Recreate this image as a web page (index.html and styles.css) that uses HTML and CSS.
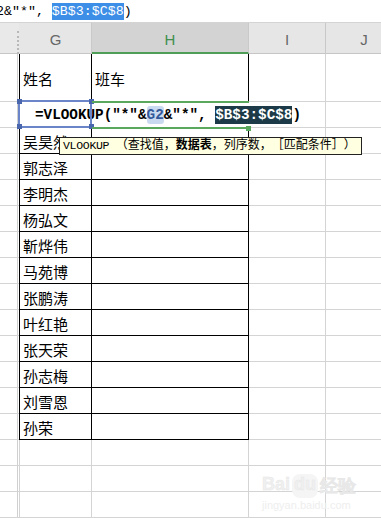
FILE: index.html
```html
<!DOCTYPE html>
<html lang="zh">
<head>
<meta charset="utf-8">
<link rel="stylesheet" href="styles.css">
</head>
<body>
<div class="fx"><span class="fx-text">2&amp;"*", <span class="fx-sel">$B$3:$C$8</span>)</span></div>
<div class="sheet">
  <div class="c f hd hd-f"></div>
  <div class="c g hd">G</div>
  <div class="c h hd hd-on">H</div>
  <div class="c i hd">I</div>
  <div class="c j hd">J</div>

  <div class="c f"></div>
  <div class="c g t tx">姓名</div>
  <div class="c h t tx">班车</div>
  <div class="c i"></div>
  <div class="c j"></div>

  <div class="c f"></div>
  <div class="c g t edit">
    <div class="editor"><span>=VLOOKUP("*"&amp;<span class="ref">G2</span>&amp;"*", <span class="rng">$B$3:$C$8</span>)</span></div>
    <span class="frame"></span>
    <span class="hdl hdl-tl"></span><span class="hdl hdl-tr"></span><span class="hdl hdl-bl"></span><span class="hdl hdl-br"></span>
  </div>
  <div class="c h t hsel"><span class="ghdl"></span></div>
  <div class="c i"></div>
  <div class="c j"></div>

  <div class="c f"></div><div class="c g t tx">吴昊然</div><div class="c h t"></div><div class="c i"></div><div class="c j"></div>
  <div class="c f"></div><div class="c g t tx">郭志泽</div><div class="c h t"></div><div class="c i"></div><div class="c j"></div>
  <div class="c f"></div><div class="c g t tx">李明杰</div><div class="c h t"></div><div class="c i"></div><div class="c j"></div>
  <div class="c f"></div><div class="c g t tx">杨弘文</div><div class="c h t"></div><div class="c i"></div><div class="c j"></div>
  <div class="c f"></div><div class="c g t tx">靳烨伟</div><div class="c h t"></div><div class="c i"></div><div class="c j"></div>
  <div class="c f"></div><div class="c g t tx">马苑博</div><div class="c h t"></div><div class="c i"></div><div class="c j"></div>
  <div class="c f"></div><div class="c g t tx">张鹏涛</div><div class="c h t"></div><div class="c i"></div><div class="c j"></div>
  <div class="c f"></div><div class="c g t tx">叶红艳</div><div class="c h t"></div><div class="c i"></div><div class="c j"></div>
  <div class="c f"></div><div class="c g t tx">张天荣</div><div class="c h t"></div><div class="c i"></div><div class="c j"></div>
  <div class="c f"></div><div class="c g t tx">孙志梅</div><div class="c h t"></div><div class="c i"></div><div class="c j"></div>
  <div class="c f"></div><div class="c g t tx">刘雪恩</div><div class="c h t"></div><div class="c i"></div><div class="c j"></div>
  <div class="c f"></div><div class="c g t tx">孙荣</div><div class="c h t"></div><div class="c i"></div><div class="c j"></div>

  <div class="c f"></div><div class="c g"></div><div class="c h"></div><div class="c i"></div><div class="c j"></div>
  <div class="c f"></div><div class="c g"></div><div class="c h"></div><div class="c i"></div><div class="c j"></div>
  <div class="c f"></div><div class="c g"></div><div class="c h"></div><div class="c i"></div><div class="c j"></div>

  <div class="tip"><span><span class="lat">VLOOKUP </span>（查找值，<b>数据表</b>，列序数，［匹配条件］）</span></div>

  <div class="wm">
    <div class="wm-top"><span>Bai</span><span class="wm-paw">du</span><span>经验</span></div>
    <div class="wm-url">jingyan.baidu.com</div>
  </div>
</div>
</body>
</html>
```

FILE: styles.css
```css
* { box-sizing: border-box; }
html, body { margin: 0; padding: 0; background: #fff; }
body {
  width: 381px;
  height: 518px;
  overflow: hidden;
  font-family: "Noto Sans CJK SC", "Liberation Sans", sans-serif;
}

.fx {
  height: 23px;
  border-bottom: 1px solid #d4d4d4;
  background: #fff;
  display: flex;
  align-items: center;
  overflow: hidden;
  white-space: nowrap;
  font-family: "Liberation Mono", "Noto Sans CJK SC", monospace;
  font-size: 13.3px;
  color: #000;
}
.fx-text { margin-left: -4px; }
.fx-sel { background: #3d8ee6; color: #fff; padding: 1px 0; }

.sheet {
  position: relative;
  display: grid;
  grid-template-columns: 19px 73px 157px 77px 77px;
  grid-template-rows: 31px 48px 26px repeat(15, 26px);
  width: 403px;
}

.c {
  border-right: 1px solid #d4d4d4;
  border-bottom: 1px solid #d4d4d4;
  min-width: 0;
}
.f { border-right: none; box-shadow: inset -1px 0 0 #fff, inset -2px 0 0 #d0d0d0; }
.g { border-left: 1px solid #d4d4d4; }

.hd {
  background: #e6e6e6;
  border-bottom-color: #c6c6c6;
  border-right-color: #c9c9c9;
  display: flex;
  align-items: center;
  justify-content: center;
  font-family: "Liberation Sans", sans-serif;
  font-size: 15px;
  color: #666;
  padding-top: 2px;
}
.hd.g { border-left-color: #e6e6e6; }
.hd-f { border-right: none; box-shadow: none; background: #e9e9e9; position: relative; }
.hd-f::after {
  content: "";
  position: absolute;
  right: 0;
  top: 8px;
  height: 23px;
  border-right: 2px dotted #b8b8b8;
}
.hd-on {
  background: #d3d3d3;
  color: #3f8f4f;
  border-bottom: 2px solid #4e9e58;
  padding-top: 3px;
}

.t { border-right-color: #000; border-bottom-color: #000; }
.g.t { border-left-color: #000; }

.tx {
  font-size: 15px;
  color: #000;
  display: flex;
  align-items: center;
  padding-left: 3px;
  padding-top: 1px;
  white-space: nowrap;
  overflow: hidden;
}

.edit { position: relative; z-index: 2; }
.editor {
  position: absolute;
  left: 0;
  top: 0;
  height: 25px;
  width: 290px;
  background: #fff;
  padding-left: 15px;
  display: flex;
  align-items: center;
  white-space: pre;
  font-family: "Liberation Mono", monospace;
  font-weight: bold;
  font-size: 14.3px;
  color: #000;
}
.ref {
  background: #c9d9ef;
  color: #34589a;
  border-radius: 3px;
  padding: 1px 0;
}
.rng {
  background: #1c3a47;
  color: #fff;
  padding: 1px 0;
}
.frame {
  position: absolute;
  left: -2px;
  top: -2px;
  width: 74px;
  height: 28px;
  border: 2px solid #6b86c8;
}
.hdl {
  position: absolute;
  width: 5px;
  height: 5px;
  background: #4a66ad;
}
.hdl-tl { left: -3px; top: -3px; }
.hdl-tr { left: 69px; top: -3px; }
.hdl-bl { left: -3px; top: 22px; }
.hdl-br { left: 69px; top: 22px; }

.hsel { position: relative; z-index: 3; border-right-color: transparent; border-bottom-color: transparent; }
.hsel::before, .hsel::after {
  content: "";
  position: absolute;
  left: 0;
  width: 157px;
  height: 2px;
  background: #5aa85e;
}
.hsel::before { top: -1px; }
.hsel::after { top: 25px; }
.ghdl {
  position: absolute;
  left: 154px;
  top: 24px;
  width: 5px;
  height: 5px;
  background: #5aa85e;
}

.tip {
  position: absolute;
  left: 59px;
  top: 114px;
  width: 303px;
  height: 18px;
  background: #ffffe1;
  border: 1px solid #222;
  z-index: 5;
  padding-left: 3px;
  display: flex;
  align-items: center;
  white-space: pre;
  font-family: "Liberation Mono", "Noto Sans CJK SC", monospace;
  font-size: 12px;
  line-height: 1;
  color: #000;
  text-spacing-trim: space-all;
}
.tip .lat { font-size: 11.5px; letter-spacing: -0.3px; }
.tip b { font-weight: bold; }

.wm {
  position: absolute;
  left: 262px;
  top: 451px;
  color: #f0f0f0;
  z-index: 4;
  pointer-events: none;
}
.wm-top {
  font-family: "Liberation Sans", sans-serif;
  font-size: 18px;
  font-weight: bold;
  display: flex;
  gap: 2px;
  -webkit-text-stroke: 0.5px #e8e8e8;
}
.wm-paw {
  background: #f5f5f5;
  border-radius: 8px;
  padding: 0 2px;
}
.wm-url {
  font-family: "Liberation Sans", sans-serif;
  font-size: 11px;
  margin-top: 1px;
  color: #eeeeee;
}
```
